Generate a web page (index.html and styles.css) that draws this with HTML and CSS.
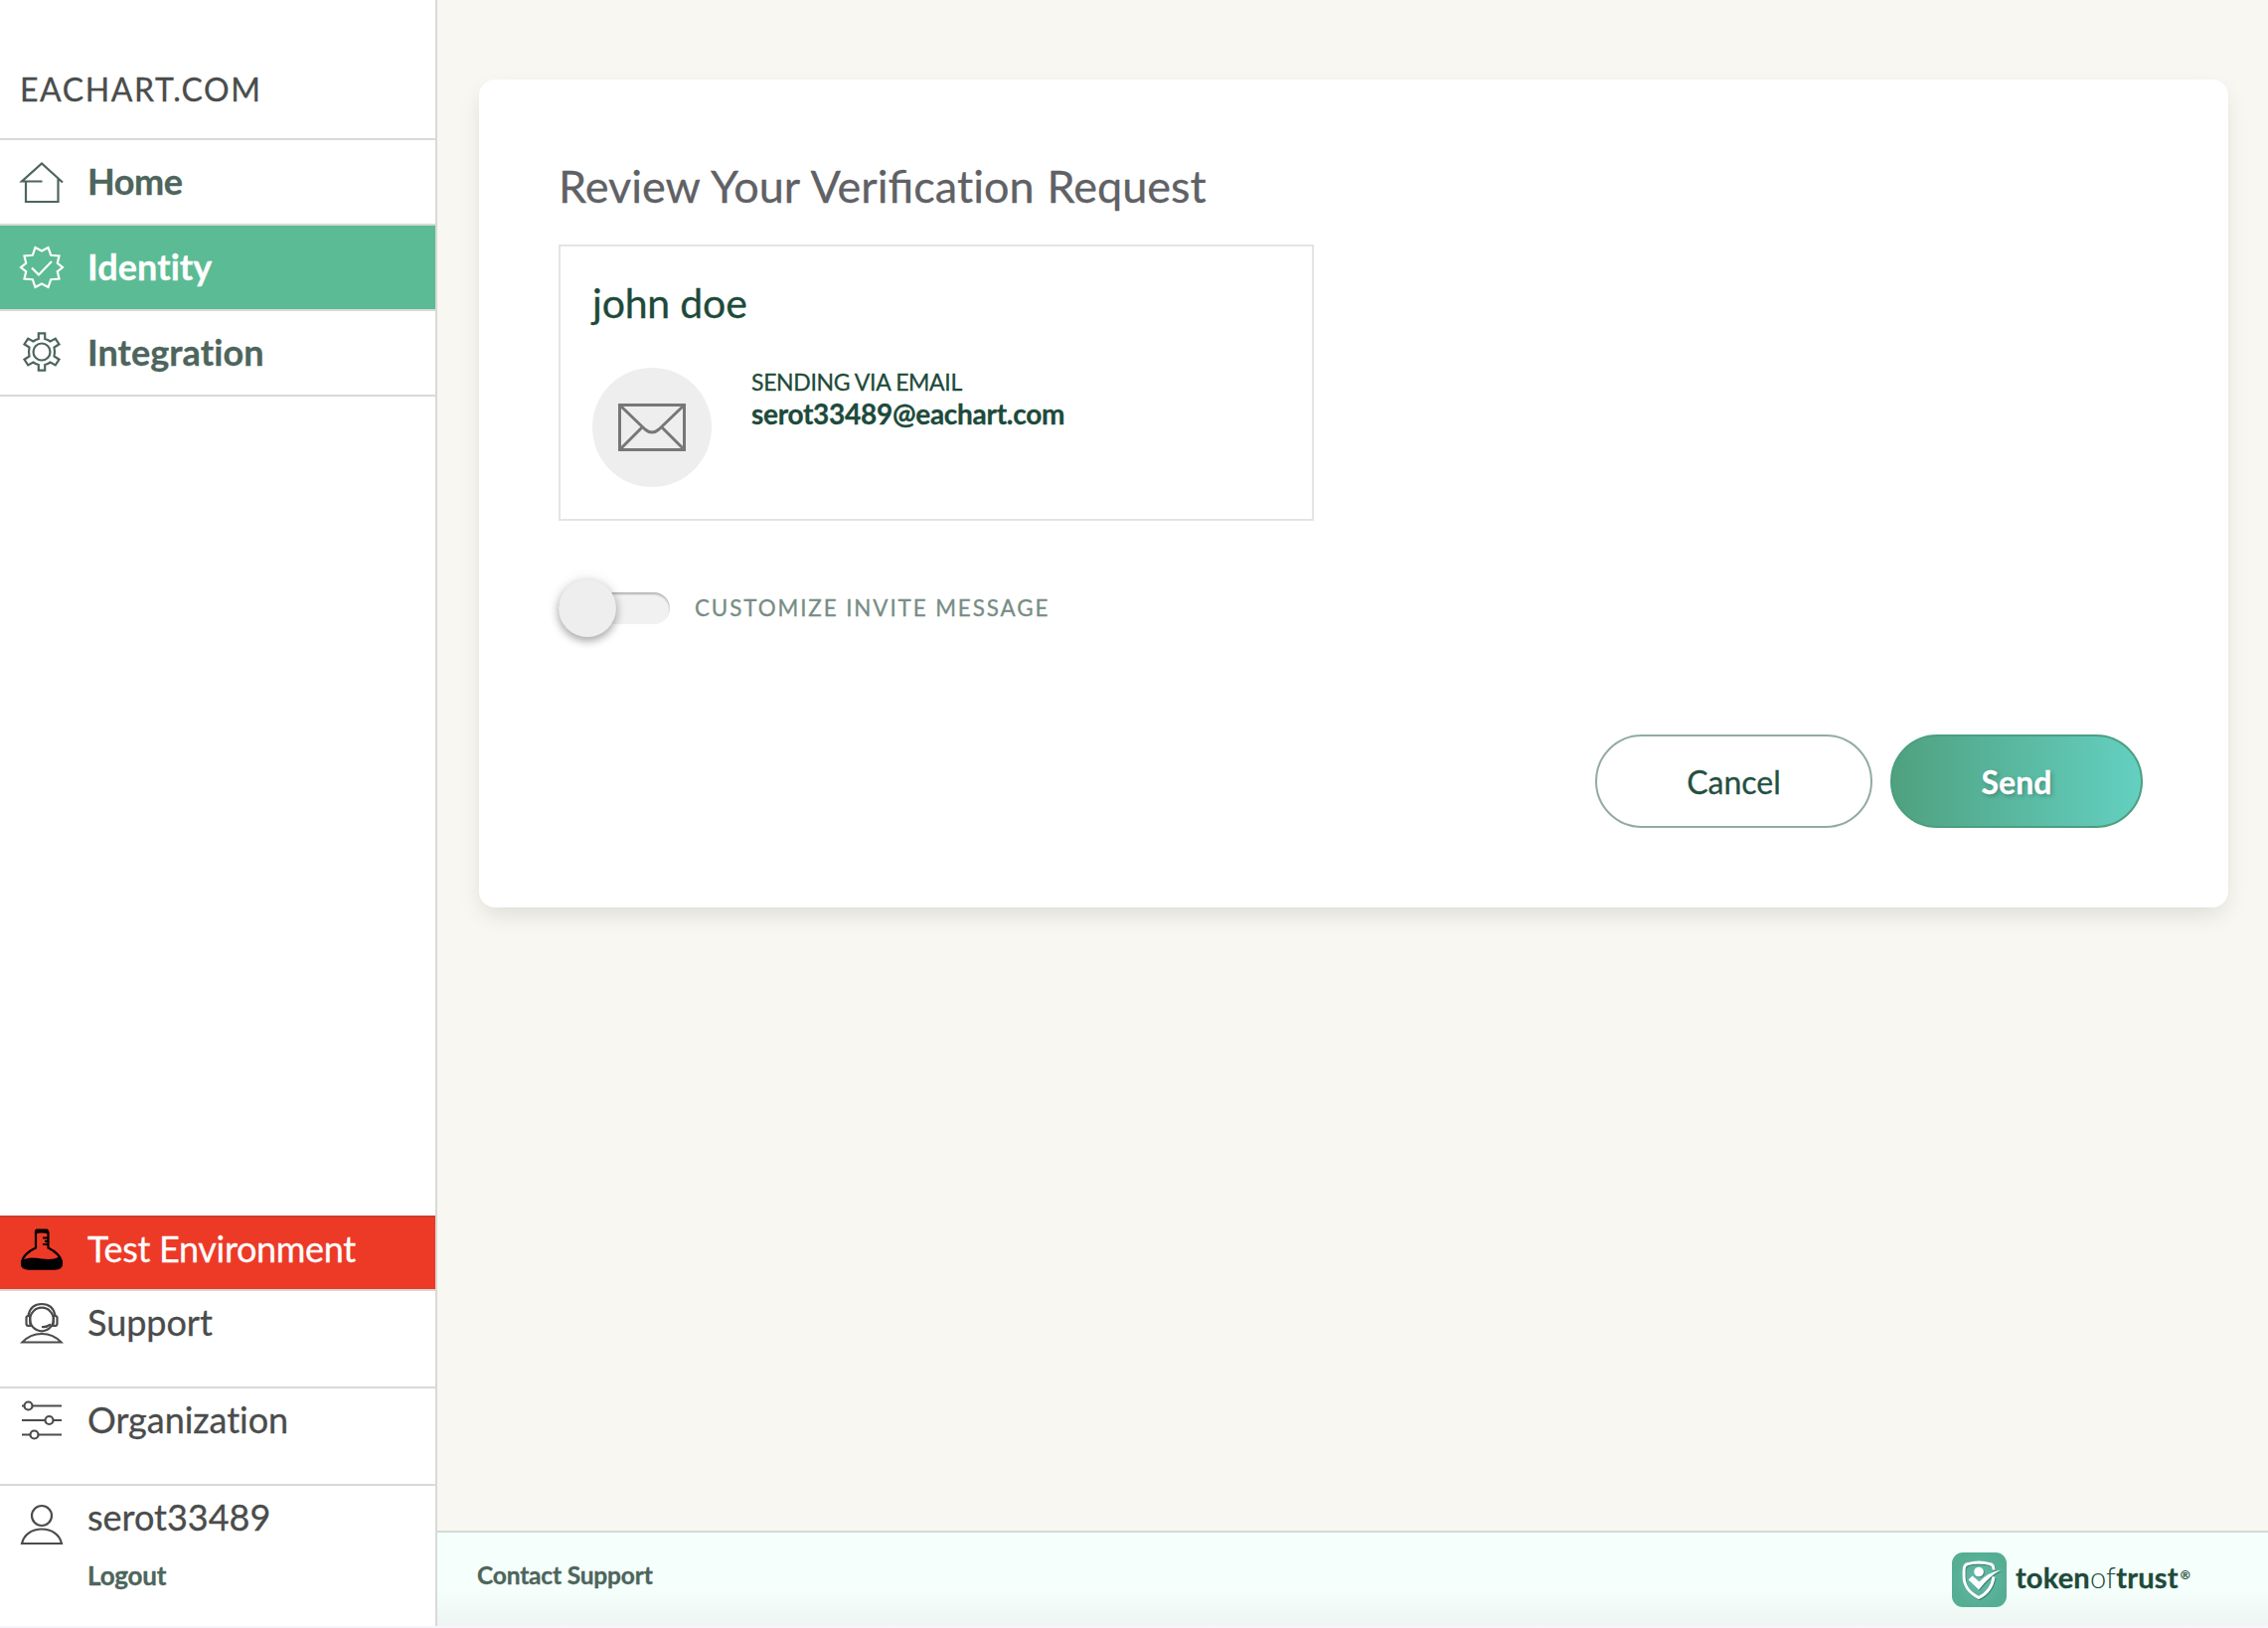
FILE: index.html
```html
<!DOCTYPE html>
<html lang="en">
<head>
<meta charset="utf-8">
<title>Review Your Verification Request</title>
<link rel="stylesheet" href="styles.css">
</head>
<body>
<div class="app">
  <aside class="sidebar">
    <div class="org-name"><span>EACHART.COM</span></div>
    <nav class="nav-main">
      <a class="nav-item home">
        <svg class="icon" viewBox="0 0 44 44"><path d="M6 21.500V42h32.500V18M22.500 21.500H2L22 3.500l21 19"/></svg>
        <span>Home</span>
      </a>
      <a class="nav-item active">
        <svg class="icon" viewBox="0 0 44 44"><path d="M22 5.500L28.500 2l2.700 7.800 8.300.7-1.700 7.300L43 22l-5.200 4.200 1.700 7.300-8.300.7L28.500 42 22 38.500 15.500 42l-2.700-7.800-8.300-.7 1.700-7.300L1 22l5.200-4.200-1.700-7.300 8.300-.7L15.500 2z"/><path d="M12 22.500l7 7L32 16"/></svg>
        <span>Identity</span>
      </a>
      <a class="nav-item">
        <svg class="icon" viewBox="0 0 44 44"><g transform="translate(0 -1)"><path d="M18.800 3.400h6.400V9q3 .8 5.400 2.500l5.200-2.900 3.700 5.700-5 3.200q1 4.500 0 9l5 3.200-3.700 5.700-5.200-2.900q-2.400 1.700-5.400 2.500v5.600h-6.400V35q-3-.8-5.400-2.500l-5.200 2.900-3.700-5.700 5-3.200q-1-4.500 0-9l-5-3.200 3.700-5.700 5.200 2.900q2.400-1.700 5.400-2.500z"/><circle cx="22" cy="22" r="8.500"/></g></svg>
        <span>Integration</span>
      </a>
    </nav>
    <nav class="nav-bottom">
      <a class="nav-item test">
        <svg class="icon" viewBox="0 0 44 44"><path d="M16 4V20.500C8 24 2 30 2 36q0 5.500 7 5.500h26q7 0 7-5.500c0-6-6-12-13.500-15.500V4"/><path class="solid" d="M15 5.500q-.5-4 2-4h10q2.500 0 2 4l-1.500.8q-5.500-1.800-11 0zM2 33.500c6-4.500 13-3 20-2s13 .5 18-2q3 3 3 6.500 0 6.500-8 6.500H9q-8 0-8-6.500z"/><path d="M23 10.500h5M25 13.800h4M23 17h5"/></svg>
        <span>Test Environment</span>
      </a>
      <a class="nav-item tall">
        <svg class="icon" viewBox="0 0 44 44"><circle cx="22" cy="18.500" r="11.800"/><path d="M8.500 14.500C10 7 15 3 22 3s12 4 13.500 11.500M22 26q5 .5 9-2.500M10 15H8.500q-2 0-2 2v5.500q0 2.500 2 2.500h2zM34 15h1.500q2 0 2 2v5.500q0 2.500-2 2.500h-2zM2.500 41.500h39C36 35.500 29 33 22 33S8 35.500 2.500 41.500z"/></svg>
        <span>Support</span>
      </a>
      <a class="nav-item tall">
        <svg class="icon" viewBox="0 0 44 44"><path d="M2 7.500h2.500M12.500 7.500H42M2 22h23.500M33.500 22H42M2 36.500h8.500M18.500 36.500H42"/><circle cx="8.500" cy="7.500" r="4"/><circle cx="29.500" cy="22" r="4"/><circle cx="14.500" cy="36.500" r="4"/></svg>
        <span>Organization</span>
      </a>
      <div class="nav-item user">
        <svg class="icon" viewBox="0 0 44 44"><circle cx="22" cy="12" r="10"/><path d="M2 40C4 31 12 25.500 22 25.500S40 31 42 40z"/></svg>
        <div class="user-text"><span>serot33489</span><a class="logout">Logout</a></div>
      </div>
    </nav>
  </aside>
  <div class="content">
    <main class="main">
      <section class="card">
        <h1 class="title">Review Your Verifica<span class="no-lig">ti</span>on Request</h1>
        <div class="recipient">
          <h2 class="recipient-name">john doe</h2>
          <div class="recipient-row">
            <div class="mail-badge">
              <svg class="mail-icon" viewBox="0 0 68 48"><path d="M1.500 1.500h65v45h-65zM1.500 1.500L27 26q7 6 14 0L66.500 1.500M1.500 46.500L24.500 23.500M66.500 46.500L43.500 23.500"/></svg>
            </div>
            <div class="recipient-info">
              <div class="via">SENDING VIA EMAIL</div>
              <div class="email">serot33489@eachart.com</div>
            </div>
          </div>
        </div>
        <div class="toggle-row">
          <div class="toggle"><div class="knob"></div></div>
          <span class="toggle-label">CUSTOMIZE INVITE MESSAGE</span>
        </div>
        <div class="actions">
          <button class="btn cancel">Cancel</button>
          <button class="btn send">Send</button>
        </div>
      </section>
    </main>
    <footer class="footer">
      <a class="contact">Contact Support</a>
      <div class="brand">
        <svg class="brand-icon" viewBox="0 0 55 55">
          <defs>
            <radialGradient id="tile"><stop offset="0" stop-color="#62b9ac"/><stop offset="1" stop-color="#55ae92"/></radialGradient>
            <filter id="soft" x="-20%" y="-20%" width="150%" height="150%"><feDropShadow dx=".7" dy="1" stdDeviation=".7" flood-color="#1d5a4a" flood-opacity=".7"/></filter>
          </defs>
          <rect width="55" height="55" rx="11" fill="url(#tile)"/>
          <g filter="url(#soft)">
            <path d="M42 17.500Q42 12 38 11.500Q27 8.500 16 11.500Q12 12 12 18.500V24Q12 38 27 45.500Q40 39 42 24.500" fill="none" stroke="#fff" stroke-width="2.800"/>
            <circle cx="27" cy="19.500" r="4.800" fill="#fff"/>
            <path d="M16.500 27.500L20.500 23.500L27.500 29.500Q36 20 49.500 17.500Q38 23 27 37.500z" fill="#fff"/>
          </g>
        </svg>
        <span class="brand-text"><b>token</b><span class="of">of</span><b>trust</b><sup>®</sup></span>
      </div>
    </footer>
  </div>
</div>
</body>
</html>
```
FILE: styles.css
```css
* { box-sizing: border-box; }
body { margin: 0; font-family: Lato, "Liberation Sans", sans-serif; color: #4a4c4b; background: #f6f6fa; -webkit-text-stroke: .3px; }
.app { display: flex; height: 1638px; padding-bottom: 2px; }

.sidebar { width: 440px; flex: none; background: #fff; border-right: 2px solid #d9d9d9; display: flex; flex-direction: column; justify-content: space-between; }
.org-name { height: 141px; padding: 68px 0 0 20px; border-bottom: 2px solid #d9d9d9; font-size: 32px; line-height: 44px; letter-spacing: 1.600px; }
.nav-main { margin-bottom: auto; }
.nav-item { display: flex; gap: 24px; padding-left: 20px; font-size: 36px; line-height: 44px; font-variant-ligatures: none; }
.nav-main .nav-item { height: 86px; padding-top: 20px; border-bottom: 2px solid #d9d9d9; font-weight: 700; color: #4d655c; letter-spacing: .080px; }
.nav-main .home { letter-spacing: -.4px; }
.nav-main .nav-item span { margin-top: -1px; }
.nav-main .active { background: #5bbb94; background-clip: padding-box; color: #fff; }
.icon { width: 44px; height: 44px; flex: none; fill: none; stroke: currentColor; stroke-width: 2.200; overflow: visible; }
.icon .solid { fill: currentColor; stroke: none; }
.nav-bottom .nav-item { padding-top: 10px; }
.nav-bottom .nav-item > span { margin-top: -1px; }
.nav-bottom .test { height: 74px; background: #ec3a27; color: #fff; border-top: 2px solid #cb3e2f; letter-spacing: -.320px; }
.test .icon { color: #000; }
.nav-bottom .tall { height: 98px; border-top: 2px solid #d9d9d9; letter-spacing: -.030px; }
.nav-bottom .user { height: 143px; border-top: 2px solid #d9d9d9; }
.user .icon { margin-top: 8px; }
.user-text { display: flex; flex-direction: column; gap: 17px; margin-top: -1px; }
.logout { font-size: 26px; line-height: 40px; font-weight: 700; letter-spacing: -.2px; color: #4d655c; }

.content { flex: 1; display: flex; flex-direction: column; background: #f8f7f2; }
.main { flex: 1; padding: 80px 40px 0 42px; }
.card { height: 833px; background: #fff; border-radius: 16px; box-shadow: 0 10px 24px -4px rgba(0,0,0,.12); padding: 80px 86px 80px 80px; display: flex; flex-direction: column; align-items: flex-start; }
.title { margin: 0 0 32px; font-size: 45px; line-height: 54px; font-weight: 400; word-spacing: 1.300px; color: #606165; white-space: nowrap; }
.no-lig { font-variant-ligatures: none; }
.recipient { width: 760px; height: 278px; border: 2px solid #e4e4e4; padding: 31px 32px; }
.recipient-name { margin: 0 0 39px; font-size: 41px; line-height: 52px; font-weight: 400; letter-spacing: -.2px; color: #1d4a3a; }
.recipient-row { display: flex; gap: 40px; }
.mail-badge { width: 120px; height: 120px; border-radius: 50%; background: #eee; display: flex; align-items: center; justify-content: center; }
.mail-icon { width: 68px; height: 48px; fill: none; stroke: #777; stroke-width: 3; }
.recipient-info { color: #1d4a3a; margin-top: -1px; }
.via { font-size: 23px; line-height: 30px; letter-spacing: -.350px; }
.email { font-size: 28px; line-height: 35px; font-weight: 700; letter-spacing: -.280px; }
.toggle-row { display: flex; align-items: center; gap: 25px; height: 58px; margin-top: 59px; }
.toggle { width: 112px; height: 32px; border-radius: 16px; background: #f1f1f1; box-shadow: inset 0 2px 2px rgba(0,0,0,.25); display: flex; align-items: center; }
.knob { width: 58px; height: 58px; flex: none; border-radius: 50%; background: #eee; box-shadow: 0 4px 8px rgba(0,0,0,.3), 0 0 14px rgba(0,0,0,.1); }
.toggle-label { font-size: 22.400px; line-height: 30px; letter-spacing: 1.900px; color: #778d85; }
.actions { align-self: stretch; display: flex; justify-content: flex-end; gap: 18px; margin-top: 98px; }
.btn { height: 94px; border-radius: 47px; font-family: inherit; font-size: 32px; padding: 0; -webkit-text-stroke: .3px; }
.cancel { width: 279px; border: 2px solid #92aba2; background: #fff; color: #24503f; }
.send { width: 254px; border: 2px solid #4b9f7e; background: linear-gradient(90deg, #4fa17f, #64d0c1); color: #fff; font-weight: 700; text-shadow: 2px 2px 4px rgba(0,0,0,.25); }

.footer { height: 96px; border-top: 2px solid #d3dbd7; background: linear-gradient(#f5fffb 60%, #eef5f2); display: flex; justify-content: space-between; align-items: flex-start; padding: 20px 76px 0 40px; }
.contact { font-size: 24.500px; line-height: 46px; font-weight: 700; letter-spacing: -.180px; color: #4d655c; }
.brand { display: flex; gap: 9px; }
.brand-icon { width: 55px; height: 55px; }
.brand-text { width: 178px; white-space: nowrap; font-size: 29px; line-height: 49px; letter-spacing: .2px; color: #1d4a3a; }
.brand-text .of { font-weight: 300; -webkit-text-stroke: 0; }
.brand-text sup { font-size: 12px; line-height: 0; vertical-align: 9px; margin-left: 2px; }
```
